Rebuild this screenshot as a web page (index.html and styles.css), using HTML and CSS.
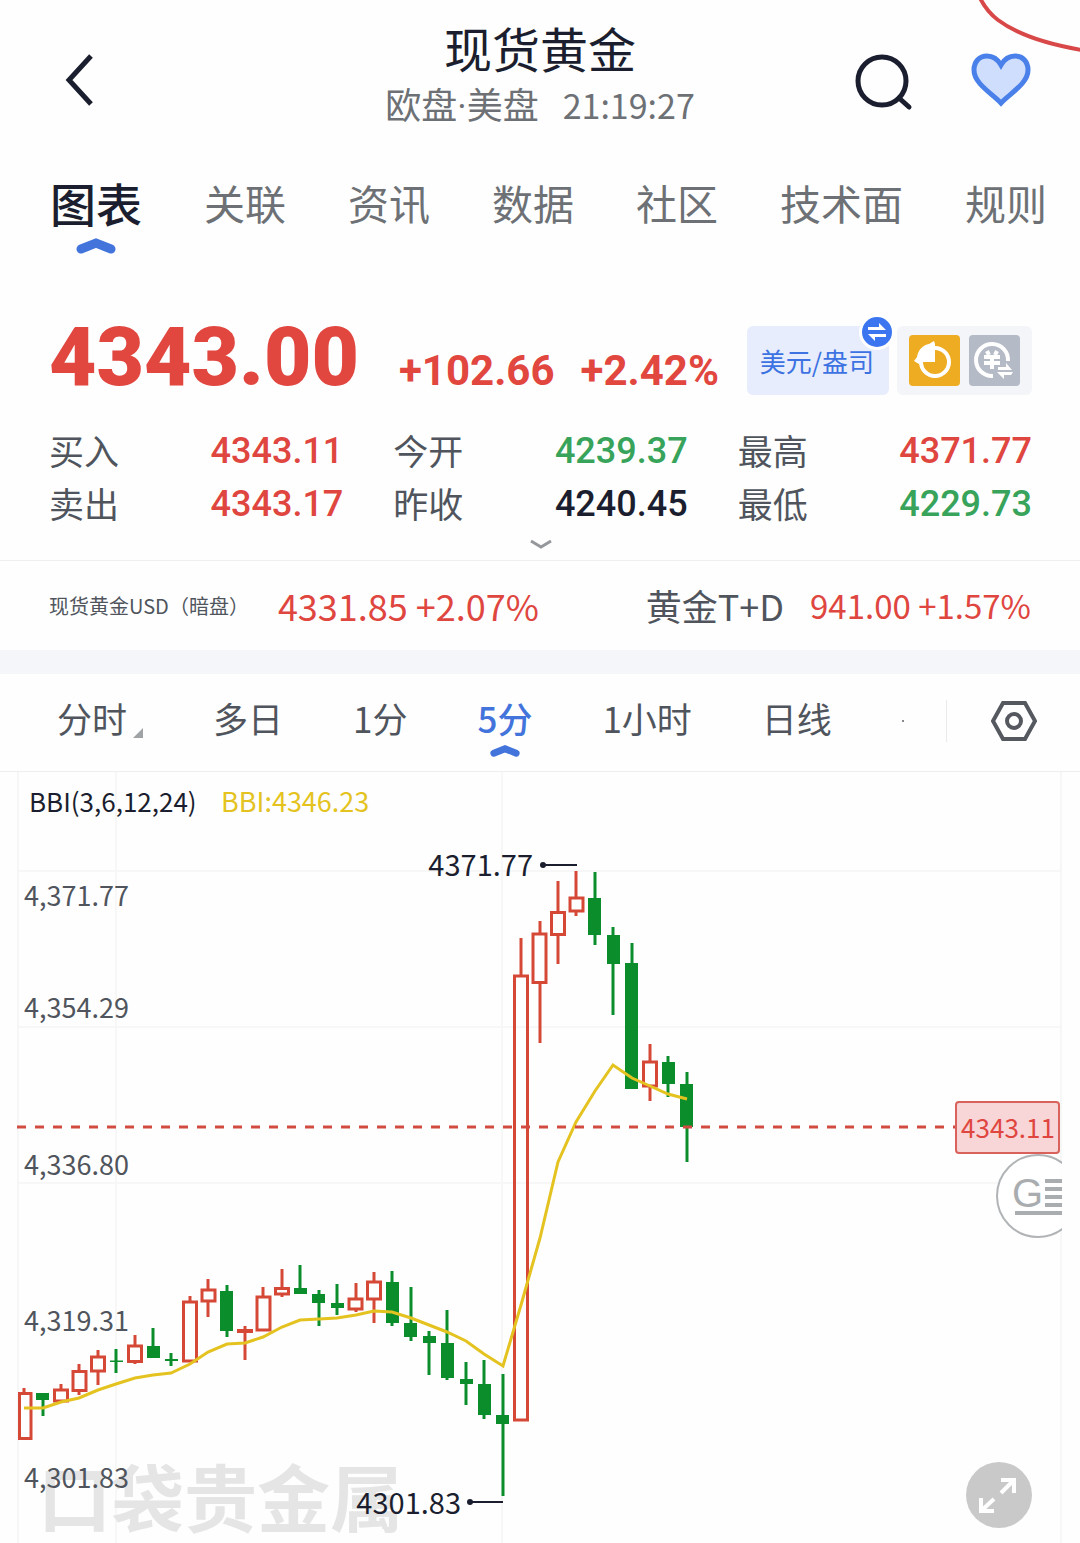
FILE: index.html
```
<!DOCTYPE html>
<html lang="zh-CN">
<head>
    <meta charset="UTF-8">
    <meta name="viewport" content="width=device-width, initial-scale=1.0">
    <title>现货黄金</title>
    <link rel="stylesheet" href="styles.css">
</head>
<body>
    <!-- red curve in the top corner -->
    <svg class="corner-line" width="104" height="56" viewBox="0 0 104 56" aria-hidden="true">
        <path d="M4 -2C8 6 14 14 22 20C42 35 70 44 106 50"/>
    </svg>

    <header class="header">
        <button type="button" class="icon-btn back" aria-label="返回">
            <svg width="30" height="54" viewBox="0 0 30 54"><path d="M26 4L4 28L26 52"/></svg>
        </button>
        <div class="heading">
            <h1>现货黄金</h1>
            <p class="session"><span>欧盘·美盘</span><time>21:19:27</time></p>
        </div>
        <div class="header-actions">
            <button type="button" class="icon-btn" aria-label="搜索">
                <svg width="60" height="64" viewBox="0 0 60 64"><circle cx="28" cy="34" r="24"/><path d="M45 51L55 60"/></svg>
            </button>
            <button type="button" class="icon-btn favorite" aria-label="自选">
                <svg width="60" height="56" viewBox="0 0 60 56"><path d="M30 14C26 7 21 5 16 5C8 5 3 11 3 19C3 33 22 43 30 52C38 43 57 33 57 19C57 11 52 5 44 5C39 5 34 7 30 14Z"/></svg>
            </button>
        </div>
    </header>

    <nav class="tabs">
        <a href="#chart" class="active">图表<svg class="caret" width="40" height="16" viewBox="0 0 40 16"><path d="M5 11L20 5L35 11"/></svg></a>
        <a href="#related">关联</a>
        <a href="#news">资讯</a>
        <a href="#data">数据</a>
        <a href="#community">社区</a>
        <a href="#technical">技术面</a>
        <a href="#rules">规则</a>
    </nav>

    <!-- quote -->
    <section class="quote">
        <div class="quote-top">
            <div class="figures">
                <strong class="price">4343.00</strong>
                <span class="change">+102.66</span>
                <span class="change">+2.42%</span>
            </div>
            <div class="chips">
                <button type="button" class="unit">美元/盎司
                    <svg class="swap" width="36" height="36" viewBox="0 0 36 36">
                        <circle cx="18" cy="18" r="18" fill="#fff"/>
                        <circle cx="18" cy="18" r="15" fill="#3b76f0"/>
                        <path d="M9 13H20V9L27 16H9ZM27 20H9L16 27V23H27Z" fill="#fff"/>
                    </svg>
                </button>
                <div class="tools">
                    <button type="button" class="tool gold" aria-label="图形">
                        <svg width="51" height="51" viewBox="0 0 51 51">
                            <circle cx="26" cy="27" r="14" fill="none" stroke="#fff" stroke-width="4"/>
                            <path d="M26 27H11L10 29L5 26L8 22C9 15 14 10 20 9L25 6L26 9Z" fill="#fff"/>
                        </svg>
                    </button>
                    <button type="button" class="tool gray" aria-label="货币换算">
                        <svg width="51" height="51" viewBox="0 0 51 51">
                            <path d="M39 26A16 16 0 1 0 24 41" fill="none" stroke="#fff" stroke-width="4"/>
                            <path d="M18 16L20 20M28 16L26 20M15 22H31M15 28H31M23 20V34" fill="none" stroke="#fff" stroke-width="4"/>
                            <path d="M29 32H37V28L43 35H29ZM44 37H28L35 44V40H42Z" fill="#fff"/>
                        </svg>
                    </button>
                </div>
            </div>
        </div>

        <dl class="stats">
            <div><dt>买入</dt><dd class="up">4343.11</dd></div>
            <div><dt>今开</dt><dd class="down">4239.37</dd></div>
            <div><dt>最高</dt><dd class="up">4371.77</dd></div>
            <div><dt>卖出</dt><dd class="up">4343.17</dd></div>
            <div><dt>昨收</dt><dd>4240.45</dd></div>
            <div><dt>最低</dt><dd class="down">4229.73</dd></div>
        </dl>
        <button type="button" class="expand" aria-label="展开">
            <svg width="24" height="12" viewBox="0 0 24 12"><path d="M2 2L12 8L22 2"/></svg>
        </button>
    </section>

    <!-- related prices -->
    <section class="related">
        <a href="#usd"><span class="small-name">现货黄金USD（暗盘）</span><span class="up">4331.85 +2.07%</span></a>
        <a href="#td"><span class="name">黄金T+D</span><span class="up small-value">941.00 +1.57%</span></a>
    </section>

    <!-- period bar -->
    <div class="periods">
        <div class="period-list">
            <button type="button">分时<i class="more"></i></button>
            <button type="button">多日</button>
            <button type="button">1分</button>
            <button type="button" class="active">5分<svg class="caret" width="30" height="12" viewBox="0 0 40 16"><path d="M5 11L20 5L35 11"/></svg></button>
            <button type="button">1小时</button>
            <button type="button">日线</button>
            <i class="dot"></i>
        </div>
        <button type="button" class="settings" aria-label="设置">
            <svg width="46" height="42" viewBox="0 0 46 42"><path d="M12 3H34L44 21L34 39H12L2 21Z"/><circle cx="23" cy="21" r="7"/></svg>
        </button>
    </div>

    <main class="chart" id="chart">
        <svg class="chart-svg" viewBox="0 772 1080 771">
            <path class="grid" d="M18 871H1061M18 1027H1061M18 1183H1061M116 772V1543M502 772V1543"/>
            <path class="frame" d="M18 772V1543M1061 772V1543"/>

            <text class="watermark" x="38" y="1526">口袋贵金属</text>

            <text class="bbi-name" x="29" y="812">BBI(3,6,12,24)</text>
            <text class="bbi-value" x="221" y="812">BBI:4346.23</text>

            <g class="axis">
                <text x="24" y="906">4,371.77</text>
                <text x="24" y="1018">4,354.29</text>
                <text x="24" y="1175">4,336.80</text>
                <text x="24" y="1331">4,319.31</text>
                <text x="24" y="1488">4,301.83</text>
            </g>

            <!-- rising candles -->
            <path class="up-line" d="M24 1388V1393M61 1384V1389M79 1364V1371M79 1391V1395M98 1350V1356M98 1372V1385M135 1335V1345M135 1362V1364M190 1296V1301M208 1279V1290M208 1302V1317M245 1326V1360M263 1287V1296M282 1269V1288M282 1295V1297M356 1283V1299M356 1310V1312M374 1272V1281M374 1300V1323M521 938V976M540 921V933M540 983V1043M558 881V912M558 935V964M576 871V898M576 911V916M650 1044V1061M650 1087V1101"/>
            <path class="up-body" d="M19.5 1393.5h11.5v45h-11.5zM54.5 1390h13v11h-13zM73 1371.5h13v19h-13zM91.500 1357h13v14h-13zM128.500 1346h13v15.500h-13zM183.500 1302h13v59h-13zM202 1290h13v11h-13zM238.500 1330.500h13v1h-13zM257 1297h13v33h-13zM275.500 1288.500h13v5.500h-13zM349 1299h13v10h-13zM367.500 1282h13v17h-13zM514.500 976h13v444h-13zM533 934h13v48.500h-13zM551.500 912.500h13v22h-13zM570 898h13v13h-13zM643.500 1062h13v24h-13z"/>

            <!-- falling candles -->
            <path class="down-line" d="M43 1395V1416M116 1349V1373M153 1328V1358M171 1353V1366M227 1285V1337M300 1265V1293M319 1290V1326M337 1284V1315M392 1271V1326M411 1287V1341M429 1331V1375M447 1310V1380M466 1362V1405M484 1360V1419M503 1374V1496M595 872V945M613 927V1015M632 943V1088M668 1056V1097M687 1072V1162"/>
            <path class="down-body" d="M36 1393h13v7h-13zM110 1360.500h13v1.500h-13zM147 1346h13v12h-13zM165 1359h13v2h-13zM220 1291h13v40h-13zM294 1288h13v6h-13zM312 1294h13v9h-13zM331 1303h13v5h-13zM386 1282h13v41h-13zM404 1323h13v14h-13zM423 1336h13v7h-13zM441 1343h13v35h-13zM460 1379h13v5h-13zM478 1384h13v31h-13zM496 1415h13v9h-13zM588 898h13v37h-13zM607 935h13v29h-13zM625 963h13v126h-13zM662 1062h13v22h-13zM680 1084h13v43h-13z"/>

            <polyline class="bbi-line" points="24,1408 43,1408 61,1402 79,1398 98,1390 116,1384 135,1378 153,1375 171,1373 190,1364 208,1352 227,1344 245,1343 263,1337 282,1327 300,1320 319,1319 337,1318 356,1315 374,1311 392,1312 411,1318 429,1325 447,1332 466,1341 484,1354 503,1366 521,1305 540,1238 558,1162 576,1122 595,1091 613,1065 632,1078 650,1086 668,1094 687,1099"/>

            <path class="price-line" d="M17 1127H955"/>
            <rect class="price-tag" x="956" y="1102" width="103" height="51" rx="3"/>
            <text class="price-tag-text" x="1008" y="1138">4343.11</text>

            <!-- high and low marks -->
            <g class="mark">
                <text x="533" y="876">4371.77</text>
                <circle cx="543" cy="865" r="3"/>
                <path d="M543 865H577"/>
                <text x="461" y="1514">4301.83</text>
                <circle cx="470" cy="1502" r="3"/>
                <path d="M470 1502H503"/>
            </g>
        </svg>

        <button type="button" class="float-btn info" aria-label="资料">
            <svg width="66" height="84" viewBox="0 0 66 84">
                <circle cx="42" cy="42" r="41" fill="#fff" fill-opacity="0.8" stroke="#b1b4b6" stroke-width="2"/>
                <text x="16" y="53" font-size="40">G</text>
                <path d="M49 27H66M49 35H66M49 43H66M49 51H66M19 59H66" stroke="#a9adb0" stroke-width="4"/>
            </svg>
        </button>
        <button type="button" class="float-btn fullscreen" aria-label="全屏">
            <svg width="66" height="66" viewBox="0 0 66 66">
                <circle cx="33" cy="33" r="33" fill="#c9c9c9"/>
                <path d="M35 18H48V31M48 18L35 31M15 36V49H28M15 49L28 37" fill="none" stroke="#fff" stroke-width="4"/>
            </svg>
        </button>
    </main>
</body>
</html>
```
FILE: styles.css
```
*{
    box-sizing: border-box;
}
body{
    margin: 0;
    position: relative;
    overflow-x: hidden;
    background-color: #fefefe;
    color: #1b1e2e;
    font-family: "Noto Sans CJK SC", sans-serif;
}
button{
    padding: 0;
    border: 0;
    background: none;
    color: inherit;
    font-family: inherit;
}
a{
    color: inherit;
    text-decoration: none;
}
svg{
    display: block;
}
h1, p, dl, dd{
    margin: 0;
}
.up{
    color: #df463f;
}
.down{
    color: #38a35a;
}
.corner-line{
    position: absolute;
    top: 0;
    right: 0;
    fill: none;
    stroke: #d94848;
    stroke-width: 4;
}

/* header */
.header{
    display: grid;
    grid-template-columns: 1fr auto 1fr;
    align-items: center;
    height: 136px;
    padding: 20px 49px 0;
}
.icon-btn svg{
    fill: none;
    stroke: #1b1e2e;
    stroke-width: 5;
}
.back{
    justify-self: start;
    padding-left: 16px;
}
.heading{
    text-align: center;
}
h1{
    font-size: 48px;
    font-weight: 400;
    line-height: 54px;
}
.session{
    display: flex;
    align-items: baseline;
    justify-content: center;
    gap: 24px;
    color: #6d7175;
    font-size: 34px;
    line-height: 62px;
}
.session span{
    font-family: Roboto, "Noto Sans CJK SC", sans-serif;
    font-size: 36px;
}
.header-actions{
    display: flex;
    align-items: center;
    justify-content: flex-end;
    gap: 57px;
}
.header-actions path{
    stroke-linecap: round;
}
.favorite svg{
    fill: #cfdefc;
    stroke: #4a80ea;
}

/* main tabs */
.tabs{
    display: flex;
    gap: 62px;
    padding: 36px 0 0 50px;
    overflow: hidden;
    color: #6d7175;
    font-size: 41px;
    line-height: 60px;
    white-space: nowrap;
    height: 120px;
}
.tabs a{
    position: relative;
}
.tabs .active{
    color: #1b1e2e;
    font-size: 46px;
    font-weight: 500;
}
.caret{
    position: absolute;
    left: 50%;
    transform: translateX(-50%);
    fill: none;
    stroke: #4274dc;
    stroke-width: 9;
    stroke-linecap: round;
}
.tabs .caret{
    top: 66px;
}

/* quote */
.quote{
    padding: 54px 48px 0 49px;
    border-bottom: 1px solid #eeeff1;
}
.quote-top{
    display: flex;
    align-items: center;
    justify-content: space-between;
}
.figures{
    display: flex;
    align-items: baseline;
    gap: 26px;
    padding-bottom: 6px;
    color: #e1463f;
    font-family: Roboto, sans-serif;
    font-weight: 700;
}
.price{
    margin-right: 14px;
    font-size: 82px;
    line-height: 94px;
}
.change{
    font-size: 42px;
}
.chips{
    display: flex;
    gap: 8px;
}
.unit{
    position: relative;
    padding: 0 15px 0 13px;
    border-radius: 6px;
    background-color: #e7edfc;
    color: #3c72e2;
    font-size: 26px;
    white-space: nowrap;
}
.swap{
    position: absolute;
    top: -12px;
    right: -6px;
}
.tools{
    display: flex;
    gap: 9px;
    padding: 9px 12px;
    border-radius: 6px;
    background-color: #f4f5f9;
}
.tool{
    border-radius: 4px;
}
.gold{
    background-color: #eeac22;
}
.gray{
    background-color: #b4bac6;
}
.stats{
    display: grid;
    grid-template-columns: repeat(3, 1fr);
    column-gap: 50px;
    padding-top: 15px;
}
.stats div{
    display: flex;
    justify-content: space-between;
    line-height: 53px;
}
.stats dt{
    color: #50555d;
    font-size: 35px;
    line-height: 49px;
}
.stats dd{
    font-family: Roboto, sans-serif;
    font-size: 36px;
    font-weight: 500;
}
.expand{
    display: block;
    margin: 0 auto;
    padding: 8px 0 9px;
}
.expand svg{
    fill: none;
    stroke: #94979b;
    stroke-width: 3;
}

/* related prices */
.related{
    display: flex;
    justify-content: space-between;
    padding: 0 49px;
    border-bottom: 24px solid #f4f6fa;
    line-height: 89px;
    font-size: 36px;
    white-space: nowrap;
}
.related a{
    display: flex;
    align-items: center;
    gap: 26px;
}
.small-name{
    color: #50555d;
    font-size: 20px;
    padding-right: 3px;
}
.name{
    color: #50555d;
}
.small-value{
    font-size: 33px;
}

/* period bar */
.periods{
    display: flex;
    align-items: center;
    justify-content: space-between;
    padding: 0 43px 4px 57px;
    border-bottom: 1px solid #eeeff1;
    color: #50555d;
}
.period-list{
    display: flex;
    align-items: center;
    gap: 70px;
}
.period-list button{
    position: relative;
    padding: 18px 0 23px;
    font-size: 35px;
    line-height: 52px;
    white-space: nowrap;
}
.period-list .active{
    color: #4274dc;
    font-weight: 500;
}
.period-list .caret{
    top: 71px;
}
.more{
    display: inline-block;
    width: 10px;
    height: 10px;
    margin-left: 6px;
    vertical-align: -5px;
    background-color: #a0a3a6;
    clip-path: polygon(100% 0, 100% 100%, 0 100%);
}
.dot{
    width: 2px;
    height: 2px;
    background-color: #85898d;
}
.settings{
    padding-left: 44px;
    border-left: 1px solid #e9eaec;
}
.settings svg{
    fill: none;
    stroke: #55595f;
    stroke-width: 4;
}

/* chart */
.chart{
    position: relative;
    overflow: hidden;
}
.chart-svg{
    width: 100%;
    height: auto;
}
.grid, .frame{
    fill: none;
    stroke: #f7f7f8;
    stroke-width: 2;
}
.frame{
    stroke: #eeeff0;
    stroke-width: 1;
}
.watermark{
    fill: #e5e5e5;
    font-size: 73px;
    font-weight: 700;
}
.bbi-name{
    fill: #1b1e2e;
    font-size: 26px;
}
.bbi-value{
    fill: #e4c321;
    font-size: 27px;
}
.axis{
    fill: #50555d;
    font-size: 27px;
}
.up-line, .up-body{
    fill: none;
    stroke: #d64836;
    stroke-width: 3;
}
.down-line{
    fill: none;
    stroke: #0b8d2c;
    stroke-width: 3;
}
.down-body{
    fill: #0b8d2c;
}
.bbi-line{
    fill: none;
    stroke: #e4c321;
    stroke-width: 3;
}
.price-line{
    fill: none;
    stroke: #d14b40;
    stroke-width: 3;
    stroke-dasharray: 9 9;
}
.price-tag{
    fill: #f8d5d7;
    stroke: #d9625c;
    stroke-width: 2;
}
.price-tag-text{
    fill: #df463f;
    font-size: 26px;
    text-anchor: middle;
}
.mark{
    fill: #1b1e2e;
    stroke-width: 2;
}
.mark text{
    font-size: 29px;
    text-anchor: end;
}
.mark path{
    stroke: #1b1e2e;
}
.float-btn{
    position: absolute;
}
.info{
    right: 18px;
    bottom: 305px;
}
.info text{
    fill: #a9adb0;
    font-family: "Liberation Sans", sans-serif;
}
.fullscreen{
    right: 48px;
    bottom: 15px;
}
```
